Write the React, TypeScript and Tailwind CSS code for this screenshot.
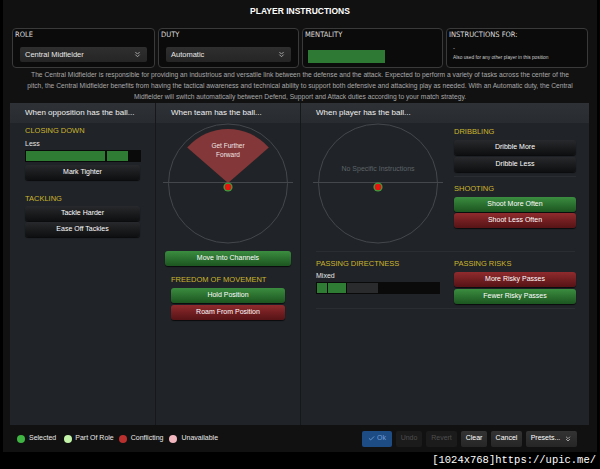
import { ChevronsDown, Check } from 'lucide-react';

const btn = 'flex h-[15px] items-center justify-center rounded-[3px] text-[7px] text-white';
const dark = 'bg-linear-to-b from-[#27292c] to-[#0e0f10] shadow-[0_1px_1px_rgba(0,0,0,0.7)]';
const green = 'bg-linear-to-b from-[#3b8d40] to-[#1c5520] shadow-[0_1px_1px_rgba(0,0,0,0.7)]';
const red = 'bg-linear-to-b from-[#902b2e] to-[#561315] shadow-[0_1px_1px_rgba(0,0,0,0.7)]';
const title = 'text-[7.5px] leading-[10px] uppercase text-[#cbb62f]';
const narrow = "font-['Liberation_Sans_Narrow','DejaVu_Sans_Condensed',sans-serif]";

function Pitch({ wedge }: { wedge?: boolean }) {
  return (
    <svg width="130" height="122" viewBox="0 0 130 122" className="mx-auto block">
      <circle cx="65" cy="60.5" r="59.5" fill="none" stroke="#44484d" strokeWidth="1" />
      <line x1="0" y1="59.5" x2="130" y2="59.5" stroke="#44484d" strokeWidth="1" />
      {wedge && (
        <>
          <path d="M65 60 L24.2 24.6 A54 54 0 0 1 105.8 24.6 Z" fill="#833738" />
          <text x="65" y="25" textAnchor="middle" fontSize="6.5" fill="#f0e6e6" fontFamily="Liberation Sans, sans-serif">Get Further</text>
          <text x="65" y="34" textAnchor="middle" fontSize="6.5" fill="#f0e6e6" fontFamily="Liberation Sans, sans-serif">Forward</text>
        </>
      )}
      {!wedge && (
        <text x="65" y="47.5" textAnchor="middle" fontSize="7" fill="#5e6369" fontFamily="Liberation Sans, sans-serif">No Specific Instructions</text>
      )}
      <circle cx="65" cy="64" r="4.6" fill="#3d9b3d" />
      <circle cx="65" cy="64" r="3.2" fill="#e8120f" />
    </svg>
  );
}

function Header({ children }: { children: React.ReactNode }) {
  return (
    <div className="h-[20px] shrink-0 bg-linear-to-b from-[#2e3237] to-[#282c31] pl-[15px] text-[8px] leading-[20px] text-[#f0f0f0]">
      {children}
    </div>
  );
}

export default function App() {
  return (
    <div className="h-[469px] w-[600px] overflow-hidden bg-black font-['Liberation_Sans',sans-serif]">
      <div className="mx-[3px] flex h-[452px] flex-col bg-[#111111]">
        <div className="flex h-[22px] items-center justify-center text-[8.5px] font-bold text-white">PLAYER INSTRUCTIONS</div>

        <div className="mt-[6px] grid grid-cols-[143px_141px_141px_142px] gap-[3px] px-[9px]">
          <div className="h-[40px] rounded-[4px] border border-[#3a3a3a] bg-[#0b0b0b] px-[2px]">
            <div className={`${narrow} pt-[1px] text-[7.5px] leading-[9px] text-[#dddddd]`}>ROLE</div>
            <div className="mx-[5px] mt-[8px] flex h-[15px] items-center justify-between rounded-[2px] bg-linear-to-b from-[#2f2f2f] to-[#252525] px-[5px] text-[7.5px] text-[#e8e8e8]">
              <span>Central Midfielder</span>
              <ChevronsDown size={9} strokeWidth={2.5} className="text-[#aaaaaa]" />
            </div>
          </div>
          <div className="h-[40px] rounded-[4px] border border-[#3a3a3a] bg-[#0b0b0b] px-[2px]">
            <div className={`${narrow} pt-[1px] text-[7.5px] leading-[9px] text-[#dddddd]`}>DUTY</div>
            <div className="mx-[5px] mt-[8px] flex h-[15px] items-center justify-between rounded-[2px] bg-linear-to-b from-[#2f2f2f] to-[#252525] px-[5px] text-[7.5px] text-[#e8e8e8]">
              <span>Automatic</span>
              <ChevronsDown size={9} strokeWidth={2.5} className="text-[#aaaaaa]" />
            </div>
          </div>
          <div className="h-[40px] rounded-[4px] border border-[#3a3a3a] bg-[#0b0b0b] px-[2px]">
            <div className={`${narrow} pt-[1px] text-[7.5px] leading-[9px] text-[#dddddd]`}>MENTALITY</div>
            <div className="ml-[3px] mt-[11px] h-[13px] w-[77px] bg-[#2e7a35]" />
          </div>
          <div className="h-[40px] rounded-[4px] border border-[#3a3a3a] bg-[#0b0b0b] px-[2px]">
            <div className={`${narrow} pt-[1px] text-[7.5px] leading-[9px] text-[#dddddd]`}>INSTRUCTIONS FOR:</div>
            <div className="ml-[4px] mt-[5px] text-[6px] leading-[8px] text-[#cccccc]">-</div>
            <div className="ml-[4px] mt-[2px] text-[4.8px] leading-[7px] text-[#cccccc]">Also used for any other player in this position</div>
          </div>
        </div>

        <div className="mt-[1px] whitespace-nowrap text-center text-[6.7px] leading-[11px] text-[#a9a9a9]">
          The Central Midfielder is responsible for providing an industrious and versatile link between the defense and the attack. Expected to perform a variety of tasks across the center of the
          <br />
          pitch, the Central Midfielder benefits from having the tactical awareness and technical ability to support both defensive and attacking play as needed. With an Automatic duty, the Central
          <br />
          Midfielder will switch automatically between Defend, Support and Attack duties according to your match strategy.
        </div>

        <div className="ml-[7px] mr-[8px] mt-[1px] flex flex-1 bg-[#202327]">
          <div className="flex w-[145px] flex-col">
            <Header>When opposition has the ball...</Header>
            <div className="px-[15px] pt-[3px]">
              <div className={title}>Closing Down</div>
              <div className="mt-[3px] text-[7px] leading-[10px] text-[#e6e6e6]">Less</div>
              <div className="mt-[1px] flex h-[12px] w-[116px] items-stretch gap-[2px] bg-[#0a0a0a] p-[1px]">
                <div className="w-[79px] bg-[#2f7c35]" />
                <div className="w-[21px] bg-[#2f7c35]" />
              </div>
              <div className={`${btn} ${dark} mt-[3px] w-[115px]`}>Mark Tighter</div>
              <div className={`${title} mt-[14px]`}>Tackling</div>
              <div className={`${btn} ${dark} mt-[2px] w-[115px]`}>Tackle Harder</div>
              <div className={`${btn} ${dark} mt-[1px] w-[115px]`}>Ease Off Tackles</div>
            </div>
          </div>

          <div className="flex w-[145px] flex-col border-l border-[#15171a]">
            <Header>When team has the ball...</Header>
            <Pitch wedge />
            <div className={`${btn} ${green} ml-[9px] mt-[6px] w-[126px]`}>Move Into Channels</div>
            <div className="pl-[15px]">
              <div className={`${title} mt-[9px]`}>Freedom Of Movement</div>
              <div className={`${btn} ${green} mt-[3px] w-[114px]`}>Hold Position</div>
              <div className={`${btn} ${red} mt-[2px] w-[114px]`}>Roam From Position</div>
            </div>
          </div>

          <div className="flex flex-1 flex-col border-l border-[#15171a]">
            <Header>When player has the ball...</Header>
            <div className="flex">
              <div className="w-[153px]">
                <Pitch />
              </div>
              <div className="w-[122px] pt-[4px]">
                <div className={title}>Dribbling</div>
                <div className={`${btn} ${dark} mt-[3px]`}>Dribble More</div>
                <div className={`${btn} ${dark} mt-[2px]`}>Dribble Less</div>
                <div className="mt-[4px] h-px bg-[#2a2d31]" />
                <div className={`${title} mt-[7px]`}>Shooting</div>
                <div className={`${btn} ${green} mt-[3px]`}>Shoot More Often</div>
                <div className={`${btn} ${red} mt-[1px]`}>Shoot Less Often</div>
              </div>
            </div>
            <div className="ml-[15px] mr-[14px] mt-[6px] h-px bg-[#2a2d31]" />
            <div className="flex pl-[15px]">
              <div className="w-[138px] pt-[7px]">
                <div className={title}>Passing Directness</div>
                <div className="mt-[2px] text-[7px] leading-[10px] text-[#e6e6e6]">Mixed</div>
                <div className="mt-[1px] flex h-[12px] w-[124px] items-stretch gap-[1px] bg-[#0a0a0a] p-[1px]">
                  <div className="w-[10px] bg-[#2f7c35]" />
                  <div className="w-[18px] bg-[#2f7c35]" />
                  <div className="w-[31px] bg-[#2a2b2d]" />
                </div>
              </div>
              <div className="w-[122px] pt-[7px]">
                <div className={title}>Passing Risks</div>
                <div className={`${btn} ${red} mt-[3px] h-[14px]`}>More Risky Passes</div>
                <div className={`${btn} ${green} mt-[2px] h-[14px]`}>Fewer Risky Passes</div>
              </div>
            </div>
            <div className="ml-[15px] mr-[14px] mt-[4px] h-px bg-[#2a2d31]" />
          </div>
        </div>

        <div className="flex h-[27px] shrink-0 items-center pl-[14px] pr-[20px] text-[7px] text-[#e8e8e8]">
          <div className="flex items-center">
            <span className="h-[8px] w-[8px] rounded-full bg-[#3fb543]" />
            <span className="ml-[4px]">Selected</span>
            <span className="ml-[8px] h-[8px] w-[8px] rounded-full bg-[#c3f3a8]" />
            <span className="ml-[3px]">Part Of Role</span>
            <span className="ml-[5px] h-[8px] w-[8px] rounded-full bg-[#b9302e]" />
            <span className="ml-[4px]">Conflicting</span>
            <span className="ml-[6px] h-[8px] w-[8px] rounded-full bg-[#f2b7bf]" />
            <span className="ml-[4px]">Unavailable</span>
          </div>
          <div className="ml-auto flex gap-[4px]">
            <div className="flex h-[16px] w-[30px] items-center justify-center gap-[2px] rounded-[2px] bg-[#1d4b83] text-[#6f9fd9]">
              <Check size={7} strokeWidth={3} />
              <span>Ok</span>
            </div>
            <div className="flex h-[16px] w-[26px] items-center justify-center rounded-[2px] bg-[#1b1b1b] text-[#4e4e4e]">Undo</div>
            <div className="flex h-[16px] w-[31px] items-center justify-center rounded-[2px] bg-[#1b1b1b] text-[#4e4e4e]">Revert</div>
            <div className="flex h-[16px] w-[26px] items-center justify-center rounded-[2px] bg-linear-to-b from-[#333333] to-[#262626] text-white">Clear</div>
            <div className="flex h-[16px] w-[31px] items-center justify-center rounded-[2px] bg-linear-to-b from-[#333333] to-[#262626] text-white">Cancel</div>
            <div className="flex h-[16px] w-[51px] items-center justify-center gap-[4px] rounded-[2px] bg-linear-to-b from-[#333333] to-[#262626] text-white">
              <span>Presets...</span>
              <ChevronsDown size={8} strokeWidth={2.5} className="text-[#bbbbbb]" />
            </div>
          </div>
        </div>
      </div>
      <div className="flex h-[17px] items-center justify-end pr-[4px] font-['Liberation_Mono',monospace] text-[10.5px] text-white">
        [1024x768]https://upic.me/
      </div>
    </div>
  );
}
